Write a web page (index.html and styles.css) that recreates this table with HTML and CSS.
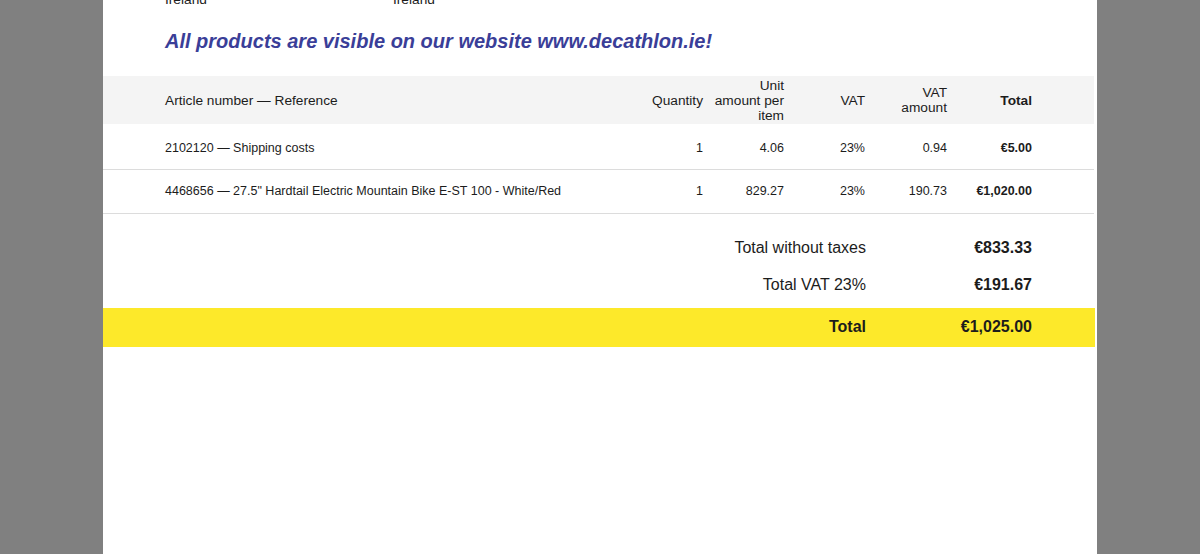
FILE: index.html
```html
<!DOCTYPE html>
<html lang="en">
<head>
<meta charset="utf-8">
<title>Invoice</title>
<link rel="stylesheet" href="styles.css">
</head>
<body>
<div class="paper">
  <div class="addresses">
    <div class="addr addr-a">Ireland</div>
    <div class="addr">Ireland</div>
  </div>
  <h2 class="promo">All products are visible on our website www.decathlon.ie!</h2>
  <table class="items">
    <colgroup>
      <col class="c-desc"><col class="c-num"><col class="c-num"><col class="c-num"><col class="c-num2"><col class="c-total">
    </colgroup>
    <thead>
      <tr>
        <th class="desc">Article number — Reference</th>
        <th>Quantity</th>
        <th>Unit amount per item</th>
        <th>VAT</th>
        <th>VAT amount</th>
        <th class="total"><b>Total</b></th>
      </tr>
    </thead>
    <tbody>
      <tr class="first">
        <td class="desc">2102120 — Shipping costs</td>
        <td>1</td>
        <td>4.06</td>
        <td>23%</td>
        <td>0.94</td>
        <td class="total"><b>€5.00</b></td>
      </tr>
      <tr>
        <td class="desc">4468656 — 27.5" Hardtail Electric Mountain Bike E-ST 100 - White/Red</td>
        <td>1</td>
        <td>829.27</td>
        <td>23%</td>
        <td>190.73</td>
        <td class="total"><b>€1,020.00</b></td>
      </tr>
    </tbody>
  </table>
  <div class="totals">
    <div class="trow"><span class="tlabel">Total without taxes</span><b class="tval">€833.33</b></div>
    <div class="trow"><span class="tlabel">Total VAT 23%</span><b class="tval">€191.67</b></div>
    <div class="trow grand"><b class="tlabel">Total</b><b class="tval">€1,025.00</b></div>
  </div>
</div>
</body>
</html>
```
FILE: styles.css
```css
*, *::before, *::after {
  box-sizing: border-box;
}
html, body {
  margin: 0;
  padding: 0;
  height: 100%;
}
body {
  background: #808080;
  font-family: "Liberation Sans", Arial, sans-serif;
  color: #1c1c1c;
  overflow: hidden;
}
.paper {
  width: 994px;
  height: 100%;
  margin: 0 auto;
  background: #ffffff;
  overflow: hidden;
}
.addresses {
  display: flex;
  margin-top: -8px;
  padding-left: 62px;
  font-size: 13.7px;
  line-height: 15px;
}
.addr-a {
  width: 228px;
}
.promo {
  margin: 22px 0 0 62px;
  font-size: 20px;
  line-height: 24px;
  font-weight: bold;
  font-style: italic;
  color: #3a3e98;
}
.items {
  margin-top: 23px;
  width: 991px;
  border-collapse: collapse;
  table-layout: fixed;
}
.c-desc { width: 519px; }
.c-num { width: 81px; }
.c-num2 { width: 82px; }
.c-total { width: 147px; }
.items th {
  background: #f4f4f4;
  height: 48px;
  padding: 0 0 0 10px;
  font-size: 13.7px;
  line-height: 15px;
  font-weight: normal;
  text-align: right;
  vertical-align: middle;
}
.items td {
  height: 44px;
  padding: 0 0 0 10px;
  font-size: 12.5px;
  text-align: right;
  vertical-align: middle;
  border-bottom: 1px solid #dcdcdc;
}
.items .first td {
  height: 45px;
  padding-top: 3px;
}
.items .desc {
  text-align: left;
  padding-left: 62px;
}
.items .total {
  padding-right: 62px;
}
.totals {
  margin-top: 16px;
  width: 991px;
}
.trow {
  display: grid;
  grid-template-columns: 1fr 166px;
  align-items: center;
  height: 37px;
  padding-right: 62px;
  font-size: 16px;
}
.tlabel, .tval {
  text-align: right;
}
.grand {
  margin-top: 4px;
  height: 39px;
  width: 992px;
  padding-right: 63px;
  background: #fde92a;
}
```
